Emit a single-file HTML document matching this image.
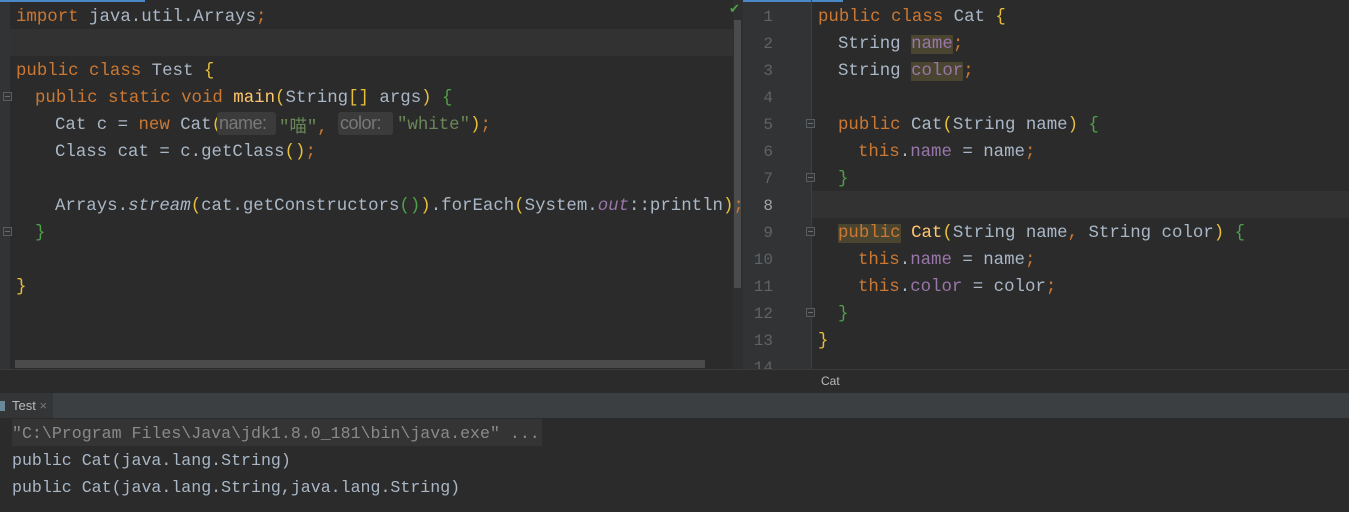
<!DOCTYPE html>
<html><head><meta charset="utf-8"><style>
*{margin:0;padding:0;box-sizing:border-box}
body{width:1349px;height:512px;background:#2b2b2b;position:relative;overflow:hidden;font-family:"Liberation Mono","Noto Sans CJK SC",monospace;font-size:17.4px;color:#a9b7c6}
.l{position:absolute;white-space:pre;line-height:27px;height:27px;padding-top:2px}
.k{color:#cc7832}.s{color:#6a8759}.p{color:#9876aa}.m{color:#ffc66d}.y{color:#e8bf3a}.g{color:#4fa04b}.i{font-style:italic}
.h{position:absolute;font-family:"Liberation Sans",sans-serif;font-size:18px;color:#787878;background:#3b3b3b;border-radius:3px;padding:0 2px;line-height:23px;height:23px;letter-spacing:-0.5px}
.n{position:absolute;left:743px;width:30px;text-align:right;color:#606366;line-height:27px;font-size:16px;padding-top:2px}
.ann{background:#4a4530}
.c{position:absolute;white-space:pre;line-height:27px;height:27px;font-size:16.6px;padding-top:1px}
.f{position:absolute;width:9px;height:9px;border:1px solid #5a5d5f;background:#313335}
.f:after{content:"";position:absolute;left:1px;top:3px;width:5px;height:1px;background:#6a6d6f}
</style></head><body>
<div style="position:absolute;left:0;top:0;width:10px;height:369px;background:#313335"></div>
<div style="position:absolute;left:0;top:0;width:145px;height:2px;background:#4a88c7"></div>
<div style="position:absolute;left:10px;top:29px;width:723px;height:27px;background:#323232"></div>
<div style="position:absolute;left:733px;top:0;width:10px;height:369px;background:#2f2f2f"></div>
<div style="position:absolute;left:734px;top:20px;width:7px;height:268px;background:#4b4b4b"></div>
<div style="position:absolute;left:15px;top:360px;width:690px;height:8px;background:#4b4b4b"></div>
<div style="position:absolute;left:729px;top:2px;color:#4fa04b;font-size:13px;font-family:'DejaVu Sans'">✔</div>
<div class="f" style="left:3px;top:92px"></div><div class="f" style="left:3px;top:227px"></div>
<div class="l" style="left:16px;top:2px"><span class="k">import</span> java.util.Arrays<span class="k">;</span></div>
<div class="l" style="left:16px;top:56px"><span class="k">public class</span> Test <span class="y">{</span></div>
<div class="l" style="left:35px;top:83px"><span class="k">public static void</span> <span class="m">main</span><span class="y">(</span>String<span class="y">[]</span> args<span class="y">)</span> <span class="g">{</span></div>
<div class="l" style="left:55px;top:110px">Cat c = <span class="k">new</span> Cat<span class="y">(</span></div>
<div class="h" style="left:217px;top:112px;width:59px">name:</div>
<div class="l s" style="left:279px;top:110px">"<span style="font-family:'Noto Sans CJK SC',sans-serif">喵</span>"<span class="k">,</span></div>
<div class="h" style="left:338px;top:112px;width:55px">color:</div>
<div class="l" style="left:397px;top:110px"><span class="s">"white"</span><span class="y">)</span><span class="k">;</span></div>
<div class="l" style="left:55px;top:137px">Class cat = c.getClass<span class="y">()</span><span class="k">;</span></div>
<div class="l" style="left:55px;top:191px">Arrays.<span class="i">stream</span><span class="y">(</span>cat.getConstructors<span class="g">()</span><span class="y">)</span>.forEach<span class="y">(</span>System.<span class="p i">out</span>::println<span class="y">)</span><span class="k">;</span></div>
<div class="l" style="left:35px;top:218px"><span class="g">}</span></div>
<div class="l" style="left:16px;top:272px"><span class="y">}</span></div>

<div style="position:absolute;left:743px;top:0;width:68px;height:369px;background:#313335"></div>
<div style="position:absolute;left:743px;top:0;width:100px;height:2px;background:#4a88c7"></div>
<div style="position:absolute;left:811px;top:191px;width:538px;height:27px;background:#323232"></div>
<div style="position:absolute;left:811px;top:0;width:1px;height:369px;background:#3c3f41"></div>
<div class="f" style="left:806px;top:119px"></div><div class="f" style="left:806px;top:173px"></div><div class="f" style="left:806px;top:227px"></div><div class="f" style="left:806px;top:308px"></div>
<div class="n" style="top:2px">1</div><div class="n" style="top:29px">2</div><div class="n" style="top:56px">3</div><div class="n" style="top:83px">4</div><div class="n" style="top:110px">5</div><div class="n" style="top:137px">6</div><div class="n" style="top:164px">7</div><div class="n" style="top:191px;color:#a4a3a3">8</div><div class="n" style="top:218px">9</div><div class="n" style="top:245px">10</div><div class="n" style="top:272px">11</div><div class="n" style="top:299px">12</div><div class="n" style="top:326px">13</div><div class="n" style="top:353px">14</div>
<div class="l" style="left:818px;top:2px"><span class="k">public class</span> Cat <span class="y">{</span></div>
<div class="l" style="left:838px;top:29px">String <span class="p ann">name</span><span class="k">;</span></div>
<div class="l" style="left:838px;top:56px">String <span class="p ann">color</span><span class="k">;</span></div>
<div class="l" style="left:838px;top:110px"><span class="k">public</span> Cat<span class="y">(</span>String name<span class="y">)</span> <span class="g">{</span></div>
<div class="l" style="left:858px;top:137px"><span class="k">this</span>.<span class="p">name</span> = name<span class="k">;</span></div>
<div class="l" style="left:838px;top:164px"><span class="g">}</span></div>
<div class="l" style="left:838px;top:218px"><span class="k ann">public</span> <span class="m">Cat</span><span class="y">(</span>String name<span class="k">,</span> String color<span class="y">)</span> <span class="g">{</span></div>
<div class="l" style="left:858px;top:245px"><span class="k">this</span>.<span class="p">name</span> = name<span class="k">;</span></div>
<div class="l" style="left:858px;top:272px"><span class="k">this</span>.<span class="p">color</span> = color<span class="k">;</span></div>
<div class="l" style="left:838px;top:299px"><span class="g">}</span></div>
<div class="l" style="left:818px;top:326px"><span class="y">}</span></div>

<div style="position:absolute;left:0;top:369px;width:1349px;height:24px;background:#2b2b2b;border-top:1px solid #3a3a3a;font-family:'Liberation Sans',sans-serif;font-size:12px;color:#bbb;line-height:23px"><span style="position:absolute;left:821px">Cat</span></div>
<div style="position:absolute;left:0;top:393px;width:1349px;height:25px;background:#3c3f41"></div>
<div style="position:absolute;left:0;top:393px;width:53px;height:25px;background:#333537;font-family:'Liberation Sans',sans-serif;font-size:13px;color:#bbb;line-height:26px;padding-left:12px">Test <span style="color:#777">×</span></div>
<div style="position:absolute;left:0;top:401px;width:5px;height:10px;background:#6a8a9a"></div>
<div class="c" style="left:12px;top:419px;background:#343434;color:#8a8a8a;padding-right:2px">"C:\Program Files\Java\jdk1.8.0_181\bin\java.exe" ...</div>
<div class="c" style="left:12px;top:446px">public Cat(java.lang.String)</div>
<div class="c" style="left:12px;top:473px">public Cat(java.lang.String,java.lang.String)</div>
</body></html>
